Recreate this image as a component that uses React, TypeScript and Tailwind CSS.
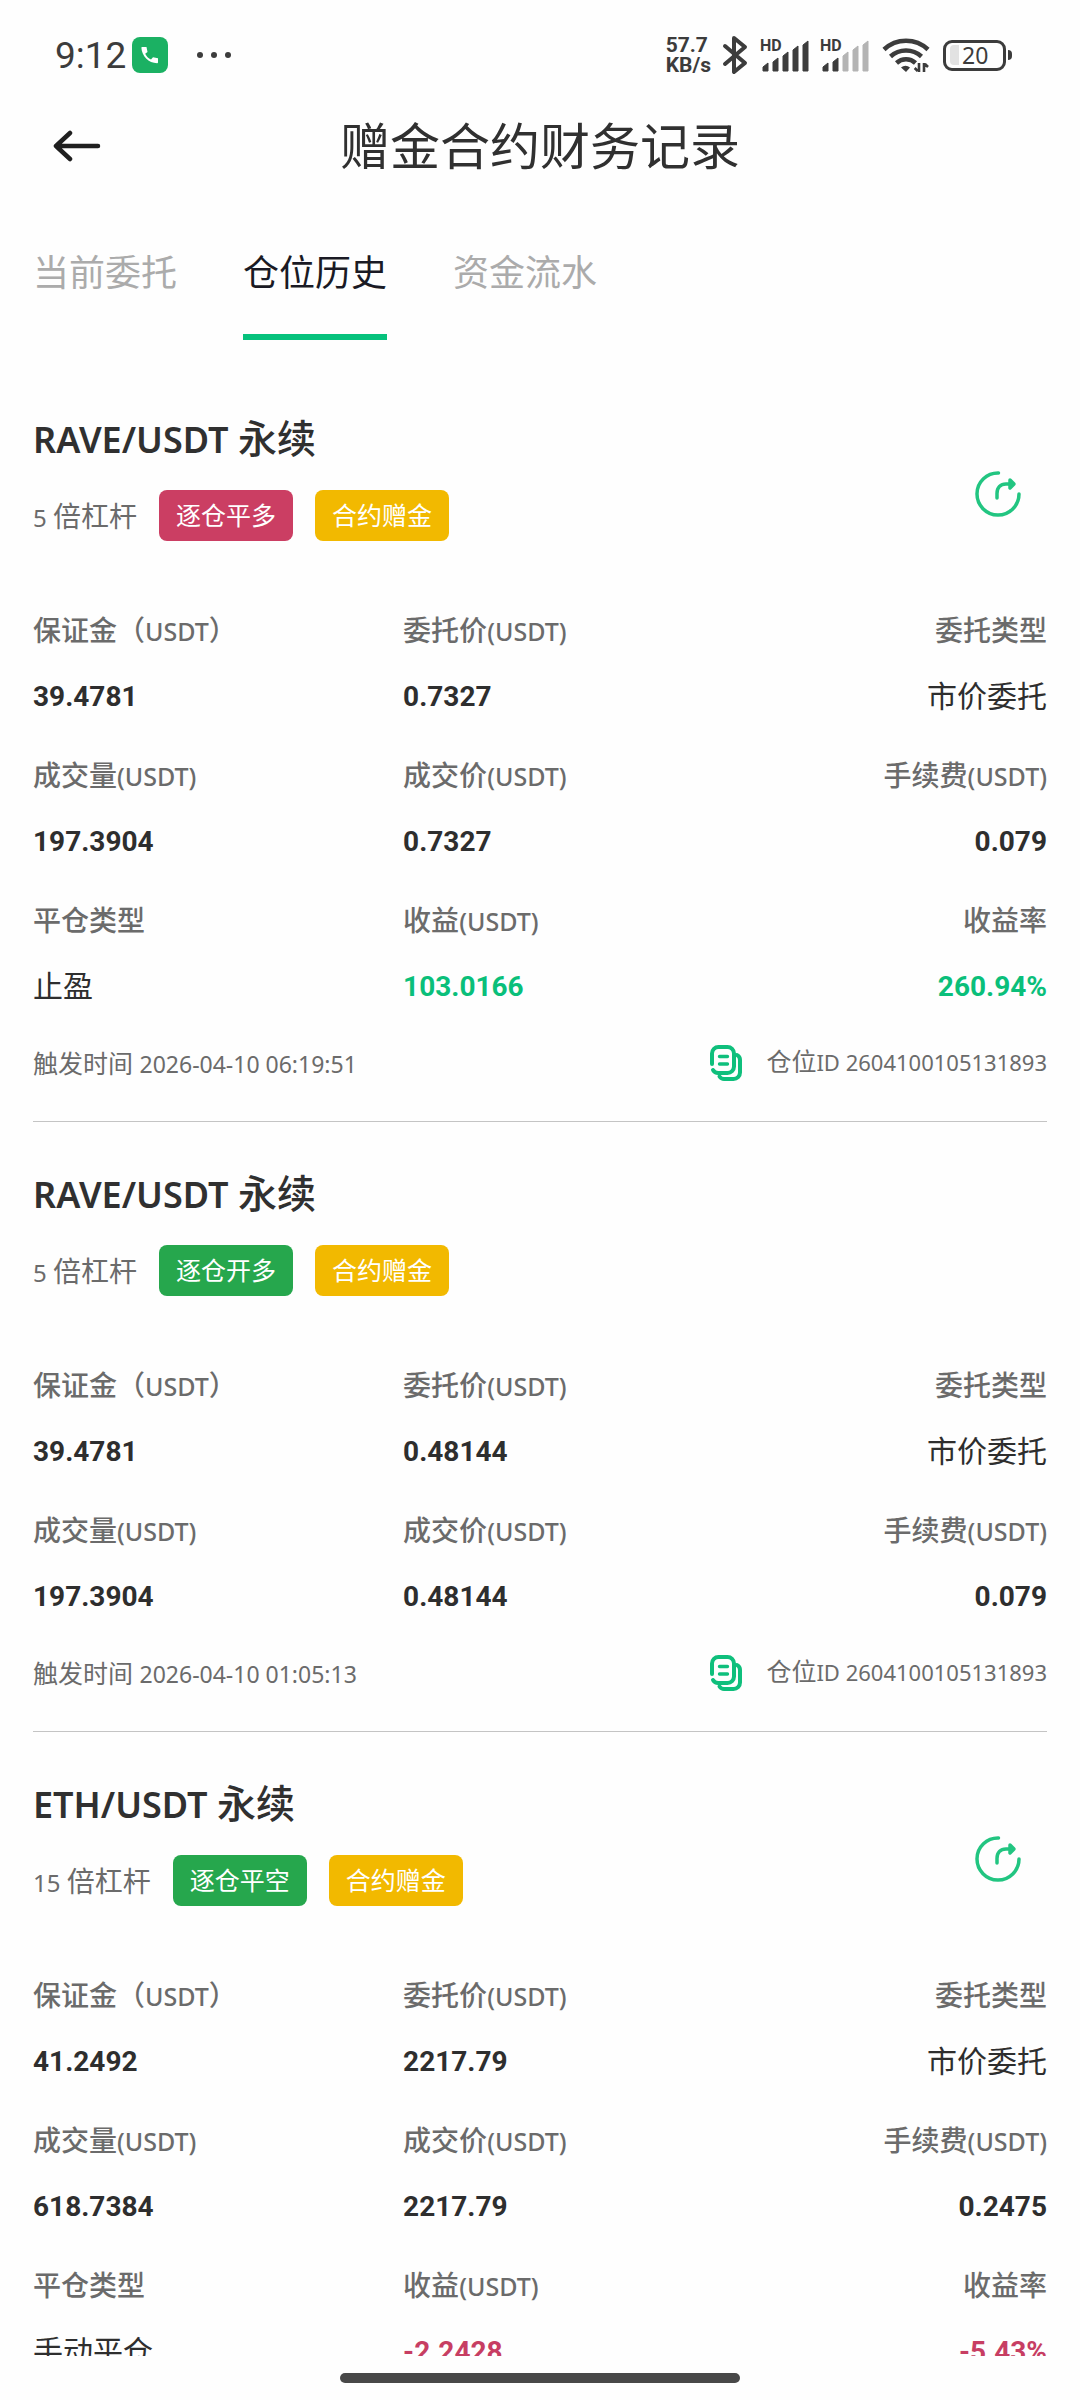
import React from "react";

type Field = { label: React.ReactNode; value: string; tone?: "up" | "down" };
type Position = {
  pair: string;
  leverage: string;
  side: string;
  sideTone: "red" | "green";
  shareable: boolean;
  fields: Field[];
  time?: string;
  id?: string;
};

const Unit = ({ wide = false }: { wide?: boolean }) => (
  <>
    {wide ? "（" : null}
    <span className="text-[25px] leading-none">{wide ? "USDT" : "(USDT)"}</span>
    {wide ? "）" : null}
  </>
);

const orderFields = (margin: string, price: string, volume: string, fee: string): Field[] => [
  { label: <>保证金<Unit wide /></>, value: margin },
  { label: <>委托价<Unit /></>, value: price },
  { label: "委托类型", value: "市价委托" },
  { label: <>成交量<Unit /></>, value: volume },
  { label: <>成交价<Unit /></>, value: price },
  { label: <>手续费<Unit /></>, value: fee },
];

const closeFields = (type: string, profit: string, rate: string, tone: "up" | "down"): Field[] => [
  { label: "平仓类型", value: type },
  { label: <>收益<Unit /></>, value: profit, tone },
  { label: "收益率", value: rate, tone },
];

const positions: Position[] = [
  {
    pair: "RAVE/USDT",
    leverage: "5",
    side: "逐仓平多",
    sideTone: "red",
    shareable: true,
    fields: [
      ...orderFields("39.4781", "0.7327", "197.3904", "0.079"),
      ...closeFields("止盈", "103.0166", "260.94%", "up"),
    ],
    time: "2026-04-10 06:19:51",
    id: "2604100105131893",
  },
  {
    pair: "RAVE/USDT",
    leverage: "5",
    side: "逐仓开多",
    sideTone: "green",
    shareable: false,
    fields: orderFields("39.4781", "0.48144", "197.3904", "0.079"),
    time: "2026-04-10 01:05:13",
    id: "2604100105131893",
  },
  {
    pair: "ETH/USDT",
    leverage: "15",
    side: "逐仓平空",
    sideTone: "green",
    shareable: true,
    fields: [
      ...orderFields("41.2492", "2217.79", "618.7384", "0.2475"),
      ...closeFields("手动平仓", "-2.2428", "-5.43%", "down"),
    ],
  },
];

function Signal({ active }: { active: number }) {
  return (
    <svg width="50" height="38" viewBox="0 0 50 38" fill="#3c3c3c" aria-hidden="true">
      <text x="0" y="15" fontSize="16" fontWeight="700" fontFamily="Roboto, sans-serif">HD</text>
      {[27, 22, 16, 10, 5].map((top, i) => (
        <path
          key={top}
          d={`M${3 + i * 10} ${top + 4}l5 -4v${35 - top}h-5z`}
          fill={i < active ? "#3c3c3c" : "#b4b4b4"}
          stroke={i < active ? "#3c3c3c" : "#b4b4b4"}
          strokeLinejoin="round"
        />
      ))}
    </svg>
  );
}

function StatusBar() {
  return (
    <div className="flex h-[110px] items-center justify-between pr-[68px] pl-[55px] text-[#3c3c3c]">
      <div className="flex items-center">
        <span className="font-[Roboto] text-[37px] leading-none">9:12</span>
        <span className="ml-[6px] flex size-9 items-center justify-center rounded-lg bg-[#1bb163]">
          <svg width="18" height="18" viewBox="0 0 18 18" fill="#fff" aria-hidden="true">
            <path d="M1 1h4.500l1 5-2.300 1.800c1.200 2.600 3.200 4.600 5.800 5.700l2-2.200 5 1v4.200c0 .5-.4.700-.8.700C7.500 17.200.800 10 .4 1.800.4 1.400.600 1 1 1z" />
          </svg>
        </span>
        <svg className="ml-7" width="36" height="6" viewBox="0 0 36 6" fill="currentColor" aria-hidden="true">
          <circle cx="4" cy="3" r="3" />
          <circle cx="18" cy="3" r="3" />
          <circle cx="32" cy="3" r="3" />
        </svg>
      </div>
      <div className="flex items-center">
        <div className="flex flex-col font-[Roboto] text-[21px] leading-5 font-bold">
          <span>57.7</span>
          <span>KB/s</span>
        </div>
        <svg className="ml-[11px]" width="26" height="40" viewBox="0 0 26 40" fill="none" stroke="currentColor" strokeWidth="4" strokeLinejoin="round" strokeLinecap="round" aria-hidden="true">
          <path d="M3 11l20 17-11 9V3l11 9L3 29" />
        </svg>
        <div className="ml-3 flex gap-[10px]">
          <Signal active={5} />
          <Signal active={2} />
        </div>
        <svg className="ml-3" width="48" height="36" viewBox="0 0 48 36" fill="none" stroke="currentColor" strokeWidth="4.500" aria-hidden="true">
          <path d="M2 12.500a32 32 0 0 1 44 0" />
          <path d="M8.500 19.500a23 23 0 0 1 31 0" />
          <path d="M14.500 26a14 14 0 0 1 19 0" />
          <path d="M24 35l-5-4.500a7 7 0 0 1 9 0z" fill="currentColor" stroke="none" />
          <path d="M37 26v9M35.700 34l-3-3M42 35v-9M43 27l3 3" strokeWidth="2.600" />
        </svg>
        <div className="ml-[13px] flex h-[31px] w-[63px] items-center rounded-[9px] border-3 border-[#3c3c3c] pl-1">
          <span className="h-[20px] w-[9px] rounded-l-sm bg-[#e2e2e2]" />
          <span className="ml-[3px] font-['Noto_Sans'] text-[23px] leading-none">20</span>
        </div>
        <span className="ml-[2px] h-[10px] w-1 rounded-r-sm bg-[#3c3c3c]" />
      </div>
    </div>
  );
}

function ShareIcon() {
  return (
    <svg width="46" height="46" viewBox="0 0 46 46" fill="none" stroke="#22c581" strokeWidth="3.500" strokeLinecap="round" strokeLinejoin="round" aria-hidden="true">
      <path d="M23.500 2A21 21 0 1 0 44 23" />
      <path d="M22 27v-4.500c0-6 3.500-9.500 9-9.500h6" />
      <path d="M35 9l4 4-4 4z" fill="#22c581" />
    </svg>
  );
}

function CopyIcon() {
  return (
    <svg width="32" height="36" viewBox="0 0 32 36" fill="none" stroke="#0fbf7c" strokeWidth="4" strokeLinecap="round" strokeLinejoin="round" aria-hidden="true">
      <path d="M2 19V8.500A6.500 6.500 0 0 1 8.500 2h9A6.500 6.500 0 0 1 24 8.500v13a6.500 6.500 0 0 1-6.500 6.500h-9A6 6 0 0 1 3 25" />
      <path d="M9.500 31.500c1 1.500 2.500 2.500 4.500 2.500h9.500a6.500 6.500 0 0 0 6.500-6.500V15c0-2.500-1-4-3-5" />
      <path d="M9.500 11.500h8M9.500 19h8" strokeWidth="3.400" />
    </svg>
  );
}

const valueTone = { up: "text-[#0abf7a]", down: "text-[#c73e63]" };

function Card({ p }: { p: Position }) {
  return (
    <article className="border-b border-[#c4c4c4] pt-[43px] pb-[38px]">
      <div className="flex items-center justify-between">
        <div>
          <h2 className="h-14 text-[39px] leading-[56px] font-medium text-[#303030]">
            <span className="text-[36px] leading-none font-semibold">{p.pair} </span>永续
          </h2>
          <div className="mt-6 flex h-[51px] items-center gap-[22px] text-white">
            <span className="text-[28px] leading-10 text-[#6b6b6b]">
              <span className="text-[24px] leading-none">{p.leverage} </span>倍杠杆
            </span>
            <span
              className={`flex h-full items-center rounded-lg px-[17px] text-[25px] ${
                p.sideTone === "red" ? "bg-[#cb3e63]" : "bg-[#26a74d]"
              }`}
            >
              {p.side}
            </span>
            <span className="flex h-full items-center rounded-lg bg-[#f2b900] px-[17px] text-[25px]">合约赠金</span>
          </div>
        </div>
        {p.shareable && (
          <button type="button" aria-label="分享" className="mt-9 mr-[26px]">
            <ShareIcon />
          </button>
        )}
      </div>
      <dl className="mt-[69px] grid grid-cols-[365fr_317fr_318fr] gap-y-[39px]">
        {p.fields.map((f, i) => (
          <div key={i} className={i % 3 === 2 ? "text-right" : ""}>
            <dt className="h-10 text-[28px] leading-10 font-medium text-[#6b6b6b]">{f.label}</dt>
            <dd
              className={`mt-[26px] h-10 ${
                /\d/.test(f.value) ? "font-[Roboto] text-[28px] leading-[42px] font-bold" : "text-[30px] leading-10"
              } ${f.tone ? valueTone[f.tone] : "text-[#2e2e2e]"}`}
            >
              {f.value}
            </dd>
          </div>
        ))}
      </dl>
      {p.id && (
        <div className="mt-[37px] flex h-10 items-center justify-between text-[25px] leading-10 text-[#6b6b6b]">
          <span>
            触发时间 <span className="text-[23px] leading-none">{p.time}</span>
          </span>
          <span className="flex items-center gap-6">
            <button type="button" aria-label="复制仓位ID">
              <CopyIcon />
            </button>
            <span className="pb-1">
              仓位<span className="text-[22px] leading-none">ID {p.id}</span>
            </span>
          </span>
        </div>
      )}
    </article>
  );
}

const tabs = ["当前委托", "仓位历史", "资金流水"];

export default function App() {
  return (
    <div className="flex h-screen flex-col overflow-hidden bg-[#fefefe] font-['Noto_Sans','Noto_Sans_CJK_SC',sans-serif]">
      <StatusBar />
      <header className="grid h-[72px] grid-cols-[1fr_auto_1fr] items-center">
        <button type="button" aria-label="返回" className="ml-[53px] justify-self-start">
          <svg width="48" height="32" viewBox="0 0 48 32" fill="none" stroke="#1f1f1f" strokeWidth="4.500" strokeLinecap="round" strokeLinejoin="round" aria-hidden="true">
            <path d="M45 16H3M17 3L3 16l14 13" />
          </svg>
        </button>
        <h1 className="text-[50px] leading-[72px] text-[#303030]">赠金合约财务记录</h1>
      </header>
      <nav className="mt-[64px] flex gap-[66px] px-[33px]">
        {tabs.map((t, i) => (
          <button
            key={t}
            type="button"
            className={`border-b-6 pb-[34px] text-[36px] leading-[54px] ${
              i === 1 ? "border-[#06c17c] text-[#1a1a24]" : "border-transparent text-[#ababab]"
            }`}
          >
            {t}
          </button>
        ))}
      </nav>
      <main className="mt-[27px] min-h-0 flex-1 overflow-hidden px-[33px]">
        {positions.map((p, i) => (
          <Card key={i} p={p} />
        ))}
      </main>
      <div className="flex h-11 shrink-0 justify-center pt-[17px]">
        <span className="h-[10px] w-[37%] rounded-full bg-[#484848]" />
      </div>
    </div>
  );
}
